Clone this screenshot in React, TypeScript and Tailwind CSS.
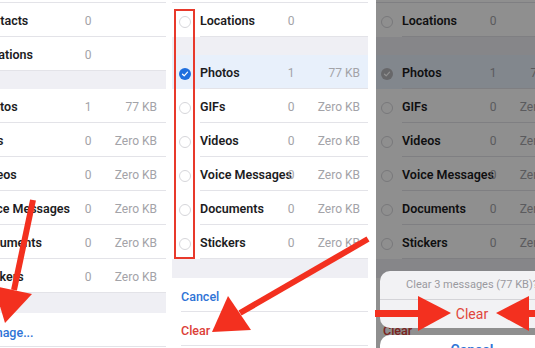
import React from 'react';

type Item = { name: string; count: string; size?: string; selected?: boolean };

const MEDIA: Item[] = [
  { name: 'Photos', count: '1', size: '77 KB', selected: true },
  { name: 'GIFs', count: '0', size: 'Zero KB' },
  { name: 'Videos', count: '0', size: 'Zero KB' },
  { name: 'Voice Messages', count: '0', size: 'Zero KB' },
  { name: 'Documents', count: '0', size: 'Zero KB' },
  { name: 'Stickers', count: '0', size: 'Zero KB' },
];

const Band = ({ h = 'h-[18px]' }: { h?: string }) => <div className={`${h} bg-[#efeff4]`} />;

const TopStrip = ({ pad }: { pad: string }) => (
  <div className="h-[3px] overflow-hidden border-b border-[#e3e3e8]">
    <div className={`-mt-[11px] leading-[12px] text-[12px] font-semibold text-[#2f74d6] ${pad}`}>Select</div>
  </div>
);

// first phone: plain list, scrolled off to the left
const PlainRow = ({ name, count, size }: Item) => (
  <div className="h-[34px] ml-[-22px] pr-[9px] pt-[3px] grid grid-cols-[100px_20px_59px] items-center border-b border-[#e3e3e8]">
    <span className="whitespace-nowrap text-[12.5px] font-semibold text-[#1c1c1e]">{name}</span>
    <span className="text-center text-[12px] text-[#a3a3a8]">{count}</span>
    <span className="text-right whitespace-nowrap text-[12px] text-[#a3a3a8]">{size}</span>
  </div>
);

const Check = ({ on, tint }: { on?: boolean; tint: string }) =>
  on ? (
    <div className={`w-[12px] h-[12px] rounded-full ${tint} flex items-center justify-center`}>
      <svg viewBox="0 0 12 12" className="w-[8px] h-[8px]">
        <path d="M2.2 6.3 L4.8 8.7 L9.8 3.3" fill="none" stroke="white" strokeWidth="1.8" strokeLinecap="round" strokeLinejoin="round" />
      </svg>
    </div>
  ) : (
    <div className="w-[12px] h-[12px] rounded-full border border-[#d6d6da]" />
  );

const SelectRow = ({ name, count, size, selected, tint }: Item & { tint: string }) => (
  <div className={`h-[34px] flex ${selected ? 'bg-[#e8f0fb]' : ''}`}>
    <div className="w-[28px] flex-none pl-[7px] pt-[3px] flex items-center">
      <Check on={selected} tint={tint} />
    </div>
    <div className="flex-1 pr-[8px] pt-[3px] grid grid-cols-[83px_16px_61px] items-center border-b border-[#e3e3e8]">
      <span className="whitespace-nowrap text-[12.5px] font-semibold text-[#1c1c1e]">{name}</span>
      <span className="text-center text-[12px] text-[#a3a3a8]">{count}</span>
      <span className="text-right whitespace-nowrap text-[12px] text-[#a3a3a8]">{size}</span>
    </div>
  </div>
);

const SelectList = ({ tint }: { tint: string }) => (
  <div className="w-[196px] flex-none bg-white">
    <TopStrip pad="pl-[8px]" />
    <SelectRow name="Locations" count="0" tint={tint} />
    <Band />
    {MEDIA.map(m => (
      <SelectRow key={m.name} {...m} tint={tint} />
    ))}
    <Band h="h-[19px]" />
    <div className="h-[34px] ml-[9px] pt-[6px] flex items-center border-b border-[#e3e3e8] text-[12.5px] font-medium text-[#2f74d6]">Cancel</div>
    <div className="h-[34px] ml-[9px] pt-[6px] flex items-center border-b border-[#e3e3e8] text-[12.5px] font-medium text-[#dc4038]">Clear</div>
  </div>
);

const Annotations = () => (
  <svg className="absolute inset-0 pointer-events-none" width="535" height="348" viewBox="0 0 535 348">
    <rect x="175" y="10" width="19" height="248" fill="none" stroke="#e8392b" strokeWidth="2" />
    {/* arrow to Manage */}
    <line x1="33" y1="200" x2="14" y2="290" stroke="#f3301f" strokeWidth="6" />
    <polygon points="-6,286 32,294 5,323" fill="#f3301f" />
    {/* arrow to Clear */}
    <line x1="368" y1="239" x2="240" y2="313" stroke="#f3301f" strokeWidth="6" />
    <polygon points="228,296 251,330 212,332" fill="#f3301f" />
    {/* arrows to sheet Clear */}
    <rect x="375" y="310" width="45" height="7" fill="#f3301f" />
    <polygon points="418,296 418,331 451,313" fill="#f3301f" />
    <rect x="526" y="310" width="12" height="7" fill="#f3301f" />
    <polygon points="529,296 529,331 496,313" fill="#f3301f" />
  </svg>
);

export default function App() {
  return (
    <div className="relative w-[535px] h-[348px] overflow-hidden bg-white flex font-['Roboto','Liberation_Sans',sans-serif]">
      {/* phone 1 */}
      <div className="w-[166px] flex-none overflow-hidden bg-white">
        <TopStrip pad="pl-[2px]" />
        <PlainRow name="Contacts" count="0" />
        <PlainRow name="Locations" count="0" />
        <Band />
        {MEDIA.map(m => (
          <PlainRow key={m.name} {...m} />
        ))}
        <Band h="h-[20px]" />
        <div className="h-[34px] ml-[-22px] pt-[8px] flex items-center border-b border-[#e3e3e8] text-[12.5px] font-medium text-[#2f74d6]">Manage...</div>
      </div>

      <div className="w-[6px] flex-none" />

      {/* phone 2 */}
      <div className="w-[196px] flex-none overflow-hidden">
        <SelectList tint="bg-[#1f6fde]" />
      </div>

      <div className="w-[8px] flex-none" />

      {/* phone 3 */}
      <div className="relative w-[159px] flex-none overflow-hidden">
        <div className="ml-[-2px]">
          <SelectList tint="bg-[#b8b8bc]" />
        </div>
        <div className="absolute inset-0 bg-black/[0.44]" />
        <div className="absolute left-[4px] top-[271px] w-[184px] h-[57px] rounded-[10px] bg-[#f2f2f4] flex flex-col">
          <div className="h-[29px] flex items-center justify-center border-b border-[#d4d4d8] text-[11px] text-[#9a9aa0]">
            Clear 3 messages (77 KB)?
          </div>
          <div className="flex-1 flex items-center justify-center text-[14px] text-[#e0453a]">Clear</div>
        </div>
        <div className="absolute left-[4px] top-[335px] w-[184px] h-[40px] rounded-[10px] bg-white flex justify-center pt-[5px] text-[14px] font-semibold text-[#2f74d6]">
          Cancel
        </div>
      </div>

      <Annotations />
    </div>
  );
}
